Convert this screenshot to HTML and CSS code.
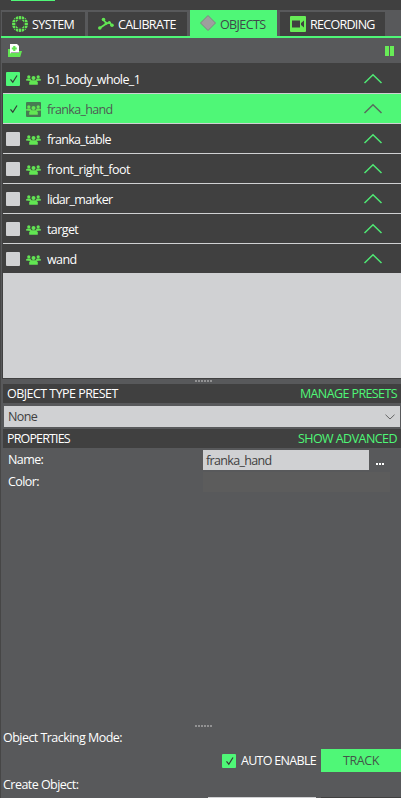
FILE: index.html
```html
<!DOCTYPE html>
<html lang="en">
<head>
<meta charset="utf-8">
<title>Objects</title>
<link rel="stylesheet" href="styles.css">
</head>
<body>
<svg class="defs" width="0" height="0">
  <symbol id="group" viewBox="0 0 15 15">
    <circle cx="2.8" cy="4.8" r="1.6"/><circle cx="12.2" cy="4.8" r="1.6"/><circle cx="7.5" cy="6" r="2"/>
    <path d="M0 8.6V7.4L1.5 6.5H4.3L5.4 8.2L4.5 9ZM15 8.6V7.4L13.5 6.5H10.7L9.6 8.2L10.5 9ZM3.2 12.8V10L5.2 8.2H9.8L11.8 10V12.8Z"/>
  </symbol>
  <symbol id="tick" viewBox="0 0 14 14"><path d="M4.5 7.3L6.8 10.2L11 3.5" fill="none" stroke="#343b36" stroke-width="1.2"/></symbol>
  <symbol id="up" viewBox="0 0 20 12"><path d="M1.5 10L10 1.8L18.5 10" fill="none" stroke="currentColor" stroke-width="1.5"/></symbol>
</svg>
<div class="app">
  <header class="top"><i></i></header>
  <nav class="tabs">
    <div class="tab system">
      <svg width="16" height="16" viewBox="0 0 16 16"><circle cx="8" cy="8" r="6" fill="none" stroke="#62e653" stroke-width="4"/><path d="M0 3.5H16M0 6.5H16M0 9.5H16M0 12.5H16M3.5 0V16M6.5 0V16M9.5 0V16M12.5 0V16" stroke="#404040" stroke-width=".65"/></svg>
      <span>SYSTEM</span></div>
    <div class="tab calibrate">
      <svg width="16" height="16" viewBox="0 0 16 16"><g fill="none" stroke="#62e653" stroke-width="1.8"><path d="M1.8 12L8.5 7.5L5.5 4M8.5 7.5L11.5 6.5L14 9.5"/></g><g fill="#62e653"><circle cx="1.8" cy="12" r="1.8"/><circle cx="5.5" cy="3.5" r="1.8"/><circle cx="8.2" cy="7.3" r="1.5"/><circle cx="11.3" cy="6.5" r="1.5"/><circle cx="14" cy="9.3" r="1.8"/></g></svg>
      <span>CALIBRATE</span></div>
    <div class="tab objects active">
      <svg width="16" height="16" viewBox="0 0 16 16"><path d="M8 .5L15.5 8L8 15.5L.5 8Z" fill="#9e9e9e" stroke="#7e8580"/></svg>
      <span>OBJECTS</span></div>
    <div class="tab recording">
      <svg width="16" height="16" viewBox="0 0 16 16"><rect width="16" height="16" rx="1" fill="#68ec57"/><path d="M2 4.5H10V11.5H2ZM11 7L14 4.5V11.5L11 9Z" fill="#404040"/></svg>
      <span>RECORDING</span></div>
  </nav>
  <div class="tools">
    <svg width="14" height="14" viewBox="0 0 14 14"><path d="M0 5H2V9H11V7H14L12.2 13H0Z" fill="#62e653"/><path d="M2 0H9L11 2V8.5H3L2 10Z" fill="#fff"/><path d="M6.3 2V7M3.8 4.5H8.8" stroke="#62e653" stroke-width="2.2"/></svg>
    <svg width="9" height="10"><path d="M0 0H4V10H0ZM5 0H9V10H5Z" fill="#68ec57"/></svg>
  </div>
  <main class="list">
    <div class="row"><b class="box on"><svg><use href="#tick"/></svg></b><svg class="grp"><use href="#group"/></svg><span class="n1">b1_body_whole_1</span><svg class="up"><use href="#up"/></svg></div>
    <div class="row selected"><b class="box on"><svg><use href="#tick"/></svg></b><svg class="grp"><use href="#group"/></svg><span class="n2">franka_hand</span><svg class="up"><use href="#up"/></svg></div>
    <div class="row"><b class="box"></b><svg class="grp"><use href="#group"/></svg><span class="n3">franka_table</span><svg class="up"><use href="#up"/></svg></div>
    <div class="row"><b class="box"></b><svg class="grp"><use href="#group"/></svg><span class="n4">front_right_foot</span><svg class="up"><use href="#up"/></svg></div>
    <div class="row"><b class="box"></b><svg class="grp"><use href="#group"/></svg><span class="n5">lidar_marker</span><svg class="up"><use href="#up"/></svg></div>
    <div class="row"><b class="box"></b><svg class="grp"><use href="#group"/></svg><span class="n6">target</span><svg class="up"><use href="#up"/></svg></div>
    <div class="row"><b class="box"></b><svg class="grp"><use href="#group"/></svg><span class="n7">wand</span><svg class="up"><use href="#up"/></svg></div>
  </main>
  <div class="grip upper"><i></i><i></i><i></i><i></i><i></i><i></i></div>
  <div class="head"><span class="preset">OBJECT TYPE PRESET</span><span class="link manage">MANAGE PRESETS</span></div>
  <div class="select"><span>None</span><svg width="10" height="6" viewBox="0 0 10 6"><path d="M.5 .7L5 5L9.5 .7" fill="none" stroke="#666"/></svg></div>
  <div class="head"><span class="props">PROPERTIES</span><span class="link advanced">SHOW ADVANCED</span></div>
  <section class="form">
    <div class="field"><label>Name:</label><div class="input"><span class="n2">franka_hand</span></div><span class="dots"><i></i><i></i><i></i></span></div>
    <div class="field"><label>Color:</label><div class="color"></div></div>
  </section>
  <div class="grip lower"><i></i><i></i><i></i><i></i><i></i><i></i></div>
  <div class="label"><span class="mode">Object Tracking Mode:</span></div>
  <div class="actions"><b class="box on"><svg><use href="#tick"/></svg></b><span class="auto">AUTO ENABLE</span><button><span>TRACK</span></button></div>
  <div class="label create"><span class="cr">Create Object:</span></div>
  <div class="edge"><i></i><i></i></div>
</div>
</body>
</html>
```
FILE: styles.css
```css
* { box-sizing: border-box; }
body { margin: 0; background: #58595b; font: 12.5px/18px "Open Sans", "Noto Sans", sans-serif; letter-spacing: -.6px; color: #fff; overflow: hidden; white-space: nowrap; }
svg { display: block; flex: none; }
.defs { position: absolute; }
.app { height: 798px; display: flex; flex-direction: column; border-left: 1px solid #464646; }
.app > * { flex: none; }
.top { height: 10px; background: #404040; margin-left: -1px; }
.top i { display: block; width: 44px; height: 1px; margin-left: 11px; background: #4ff777; }
.tabs { height: 28px; display: flex; align-items: flex-end; padding-left: 1px; border-bottom: 2px solid #4ff777; }
.tab { height: 24px; display: flex; align-items: center; background: #404040; margin-right: 3px; }
.tab span { margin-top: 2px; }
.system { width: 83px; padding-left: 10px; gap: 4px; }
.calibrate { width: 99px; padding-left: 10px; gap: 4px; }
.active { height: 26px; width: 87px; padding-left: 10px; gap: 4px; background: #4ff777; color: #40484a; }
.active span { margin-top: 3px; }
.recording { width: 105px; padding-left: 10px; gap: 4px; letter-spacing: -.7px; }
.tools { height: 25px; display: flex; align-items: center; justify-content: space-between; padding: 0 7px; }
.list { height: 316px; margin-left: 1px; border: 1px solid #404040; border-right: 0; background: #d0d1d3; }
.row { height: 30px; display: flex; align-items: center; padding: 1px 18px 0 3px; background: #404040; border-bottom: 1px solid #d0d1d3; }
.row span { margin-top: 2px; }
.box { width: 14px; height: 14px; flex: none; background: #d0d1d3; border-radius: 1px; }
.box svg { width: 14px; height: 14px; }
.on { background: #4ff777; }
.grp { width: 15px; height: 15px; margin: 1px 6px 0; fill: #62e653; }
.up { width: 20px; height: 12px; margin: 0 0 0 auto; color: #4fe774; }
.selected { background: #4ff777; color: #505a54; }
.selected .grp { background: #477b52; border-radius: 1px; }
.selected .up { color: #586b5d; }
.n1 { letter-spacing: -.62px; }
.n2 { letter-spacing: -.66px; }
.n3, .n5 { letter-spacing: -.7px; }
.n4 { letter-spacing: -.48px; }
.grip { height: 5px; display: flex; gap: 1px; align-items: center; padding-left: 194px; }
.grip i { width: 2px; height: 2px; background: #929293; }
.upper { align-items: flex-start; padding-top: 1px; }
.head { height: 19px; display: flex; align-items: center; justify-content: space-between; margin-left: 2px; padding: 0 4px; background: #404040; }
.preset { letter-spacing: -.54px; }
.link { color: #4ff777; }
.advanced { letter-spacing: -.55px; }
.select { height: 21px; margin: 3px 1px 2px 3px; padding: 1px 5px 0 4px; display: flex; align-items: center; justify-content: space-between; background: #d0d1d3; color: #404040; }
.props { letter-spacing: -.85px; }
.form { height: 273px; padding: 2px 0 0 7px; }
.field { height: 20px; display: flex; align-items: center; margin-bottom: 2px; }
.field label { width: 195px; margin-top: 0; }
.input { width: 166px; height: 20px; padding: 2px 3px 0; background: #d0d1d3; color: #404040; }
.color { width: 187px; height: 20px; background: #5c5c5c; }
.dots { display: flex; gap: 1px; margin: 8px 0 0 7px; }
.dots i { width: 2px; height: 2px; background: #fff; }
.lower { height: 10px; }
.label { height: 18px; margin: -2px 0 0 2px; letter-spacing: -.54px; }
.actions { height: 23px; margin-top: 2px; display: flex; align-items: center; justify-content: flex-end; }
.auto { width: 80px; margin: 1px 0 0 5px; letter-spacing: -.7px; }
button { width: 80px; height: 23px; padding: 1px 0 0; border: 0; background: #4ff777; color: #435649; font: inherit; letter-spacing: -.4px; text-align: center; }
.create { margin-top: 4px; }
.edge { height: 1px; margin-top: auto; padding-left: 207px; display: flex; gap: 5px; }
.edge i { width: 108px; background: #d0d1d3; }
.edge i + i { width: 80px; background: #404040; }
```
